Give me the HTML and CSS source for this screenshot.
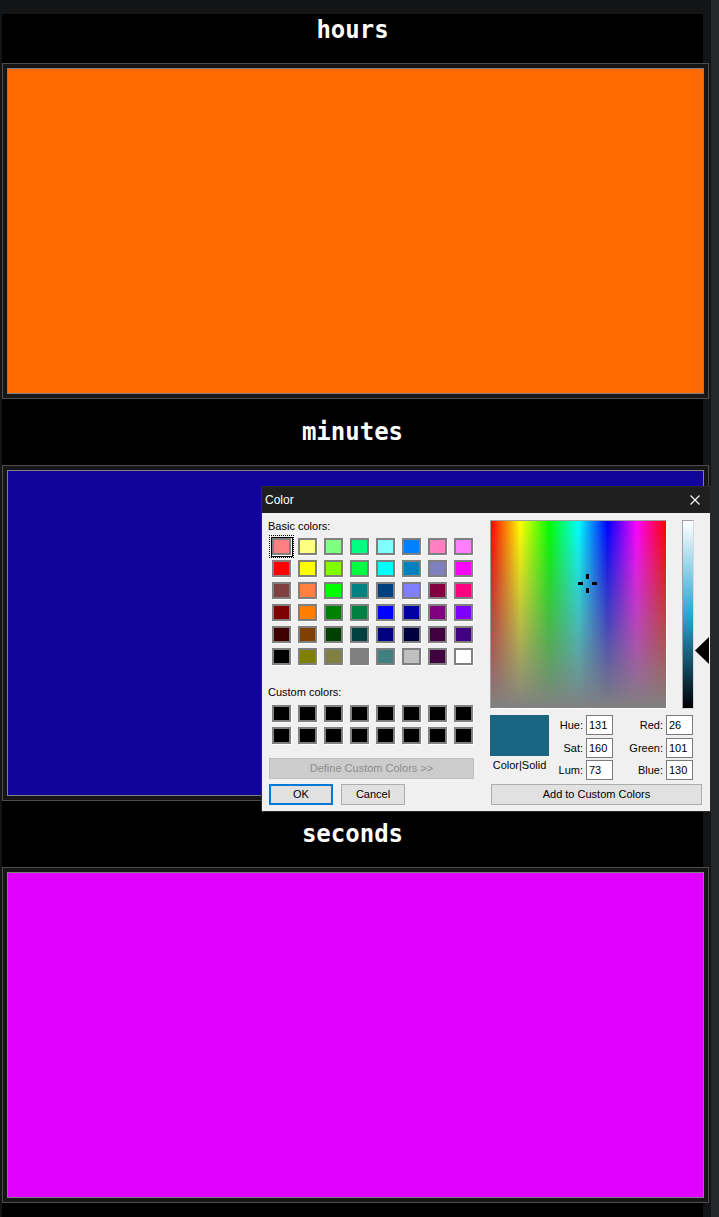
FILE: index.html
```html
<!DOCTYPE html>
<html>
<head>
<meta charset="utf-8">
<title>Clock colors</title>
<link rel="stylesheet" href="styles.css">
</head>
<body>
<div class="app">
  <main class="main">
    <section class="block">
      <h2 class="heading heading--cut">hours</h2>
      <div class="panel"><div class="fill fill--orange"></div></div>
    </section>
    <section class="block">
      <h2 class="heading">minutes</h2>
      <div class="panel"><div class="fill fill--blue"></div></div>
    </section>
    <section class="block">
      <h2 class="heading">seconds</h2>
      <div class="panel"><div class="fill fill--magenta"></div></div>
    </section>
  </main>
  <div class="gutter"></div>
  <div class="scrollbar"></div>
</div>

<div class="dialog">
  <div class="titlebar">
    <span class="title">Color</span>
    <span class="close"><svg width="10" height="10" viewBox="0 0 10 10"><path d="M0.5 0.5 L9.5 9.5 M9.5 0.5 L0.5 9.5" stroke="#ffffff" stroke-width="1.1" fill="none"/></svg></span>
  </div>
  <div class="dlg-body">
    <div class="left">
      <div class="lbl">Basic colors:</div>
      <div class="grid basic">
        <span class="sw sw--sel" style="background:#FF8080"></span>
        <span class="sw" style="background:#FFFF80"></span>
        <span class="sw" style="background:#80FF80"></span>
        <span class="sw" style="background:#00FF80"></span>
        <span class="sw" style="background:#80FFFF"></span>
        <span class="sw" style="background:#0080FF"></span>
        <span class="sw" style="background:#FF80C0"></span>
        <span class="sw" style="background:#FF80FF"></span>
        <span class="sw" style="background:#FF0000"></span>
        <span class="sw" style="background:#FFFF00"></span>
        <span class="sw" style="background:#80FF00"></span>
        <span class="sw" style="background:#00FF40"></span>
        <span class="sw" style="background:#00FFFF"></span>
        <span class="sw" style="background:#0080C0"></span>
        <span class="sw" style="background:#8080C0"></span>
        <span class="sw" style="background:#FF00FF"></span>
        <span class="sw" style="background:#804040"></span>
        <span class="sw" style="background:#FF8040"></span>
        <span class="sw" style="background:#00FF00"></span>
        <span class="sw" style="background:#008080"></span>
        <span class="sw" style="background:#004080"></span>
        <span class="sw" style="background:#8080FF"></span>
        <span class="sw" style="background:#800040"></span>
        <span class="sw" style="background:#FF0080"></span>
        <span class="sw" style="background:#800000"></span>
        <span class="sw" style="background:#FF8000"></span>
        <span class="sw" style="background:#008000"></span>
        <span class="sw" style="background:#008040"></span>
        <span class="sw" style="background:#0000FF"></span>
        <span class="sw" style="background:#0000A0"></span>
        <span class="sw" style="background:#800080"></span>
        <span class="sw" style="background:#8000FF"></span>
        <span class="sw" style="background:#400000"></span>
        <span class="sw" style="background:#804000"></span>
        <span class="sw" style="background:#004000"></span>
        <span class="sw" style="background:#004040"></span>
        <span class="sw" style="background:#000080"></span>
        <span class="sw" style="background:#000040"></span>
        <span class="sw" style="background:#400040"></span>
        <span class="sw" style="background:#400080"></span>
        <span class="sw" style="background:#000000"></span>
        <span class="sw" style="background:#808000"></span>
        <span class="sw" style="background:#808040"></span>
        <span class="sw" style="background:#808080"></span>
        <span class="sw" style="background:#408080"></span>
        <span class="sw" style="background:#C0C0C0"></span>
        <span class="sw" style="background:#400040"></span>
        <span class="sw" style="background:#FFFFFF"></span>
      </div>
      <div class="lbl lbl--custom">Custom colors:</div>
      <div class="grid custom">
        <span class="sw sw--empty"></span><span class="sw sw--empty"></span><span class="sw sw--empty"></span><span class="sw sw--empty"></span>
        <span class="sw sw--empty"></span><span class="sw sw--empty"></span><span class="sw sw--empty"></span><span class="sw sw--empty"></span>
        <span class="sw sw--empty"></span><span class="sw sw--empty"></span><span class="sw sw--empty"></span><span class="sw sw--empty"></span>
        <span class="sw sw--empty"></span><span class="sw sw--empty"></span><span class="sw sw--empty"></span><span class="sw sw--empty"></span>
      </div>
      <div class="btn btn--disabled define">Define Custom Colors &gt;&gt;</div>
      <div class="btn-row">
        <div class="btn btn--default">OK</div>
        <div class="btn">Cancel</div>
      </div>
    </div>
    <div class="right">
      <div class="spec-row">
        <div class="spectrum">
          <svg class="cross" width="20" height="20" viewBox="0 0 20 20">
            <rect x="9" y="1" width="3" height="5" fill="#000"/>
            <rect x="9" y="15" width="3" height="5" fill="#000"/>
            <rect x="1" y="9" width="5" height="3" fill="#000"/>
            <rect x="15" y="9" width="5" height="3" fill="#000"/>
          </svg>
        </div>
        <div class="lum"></div>
        <svg class="pointer" width="14" height="27" viewBox="0 0 14 27"><polygon points="0,13.5 14,0 14,27" fill="#000"/></svg>
      </div>
      <div class="info-row">
        <div class="preview-col">
          <div class="preview"></div>
          <div class="preview-lbl">Color|Solid</div>
        </div>
        <div class="fields">
          <span class="flbl">Hue:</span><span class="fbox">131</span><span class="flbl">Red:</span><span class="fbox">26</span>
          <span class="flbl">Sat:</span><span class="fbox">160</span><span class="flbl">Green:</span><span class="fbox">101</span>
          <span class="flbl">Lum:</span><span class="fbox">73</span><span class="flbl">Blue:</span><span class="fbox">130</span>
        </div>
      </div>
      <div class="btn add">Add to Custom Colors</div>
    </div>
  </div>
</div>
</body>
</html>
```

FILE: styles.css
```css
html, body {
  margin: 0;
  padding: 0;
}

body {
  background: #131416;
  width: 719px;
  height: 1217px;
  overflow: hidden;
  position: relative;
}

.app {
  display: flex;
  height: 1217px;
}

.main {
  flex: none;
  width: 701px;
  margin: 14px 0 0 2px;
  background: #000;
}

.gutter {
  flex: 1;
}

.scrollbar {
  flex: none;
  width: 8px;
  background: #26272a;
}

.heading {
  margin: 0;
  height: 66px;
  text-align: center;
  font-family: "DejaVu Sans Mono", monospace;
  font-weight: bold;
  font-size: 24px;
  line-height: 66px;
  color: #fff;
}

.heading--cut {
  height: 49px;
  line-height: 32px;
}

.panel {
  width: 707px;
  height: 336px;
  box-sizing: border-box;
  border: 1px solid #4d4d4d;
  background: #161616;
  padding: 4px;
}

.fill {
  height: 100%;
  box-sizing: border-box;
  border: 1px solid #7f7f7f;
}

.fill--orange { background: #ff6a00; }
.fill--blue { background: #10049b; }
.fill--magenta { background: #df00ff; }

/* Color dialog */
.dialog {
  position: absolute;
  left: 261px;
  top: 486px;
  width: 450px;
  height: 326px;
  box-sizing: border-box;
  border: 1px solid #2b2b2b;
  background: #f0f0f0;
  font-family: "Liberation Sans", Arial, sans-serif;
  font-size: 11px;
  color: #000;
  display: flex;
  flex-direction: column;
}

.titlebar {
  flex: none;
  height: 26px;
  background: #1f1f1f;
  display: flex;
  align-items: center;
  justify-content: space-between;
}

.title {
  color: #fff;
  font-size: 12px;
  padding-left: 3px;
}

.close {
  width: 30px;
  height: 26px;
  display: flex;
  align-items: center;
  justify-content: center;
}

.dlg-body {
  display: flex;
  padding: 7px 0 0 6px;
}

.left {
  flex: none;
  width: 216px;
  display: flex;
  flex-direction: column;
  align-items: flex-start;
}

.lbl {
  height: 13px;
  line-height: 13px;
}

.lbl--custom {
  margin-top: 21px;
}

.grid {
  display: grid;
  grid-template-columns: repeat(8, 19px);
  grid-auto-rows: 17px;
  column-gap: 7px;
  row-gap: 5px;
  margin-left: 4px;
}

.basic { margin-top: 5px; }
.custom { margin-top: 6px; }

.sw {
  display: block;
  box-sizing: border-box;
  border: 2px solid #808080;
  box-shadow: 1px 1px 0 #fff;
  position: relative;
}

.sw--empty { background: #000; }

.sw--sel::before {
  content: "";
  position: absolute;
  left: -3px;
  top: -3px;
  right: -4px;
  bottom: -4px;
  border: 1px solid #000;
}

.sw--sel::after {
  content: "";
  position: absolute;
  left: -5px;
  top: -5px;
  right: -5px;
  bottom: -5px;
  border: 1px dotted #000;
}

.btn {
  box-sizing: border-box;
  height: 21px;
  width: 64px;
  border: 1px solid #adadad;
  background: #e1e1e1;
  display: flex;
  align-items: center;
  justify-content: center;
  line-height: 13px;
}

.btn--default {
  border: 2px solid #0078d7;
}

.btn--disabled {
  background: #cccccc;
  border-color: #bfbfbf;
  color: #8d8d8d;
}

.define {
  margin: 14px 0 0 1px;
  width: 205px;
}

.btn-row {
  display: flex;
  gap: 8px;
  margin: 5px 0 0 1px;
}

.right {
  flex: none;
  width: 219px;
  margin-left: 6px;
  display: flex;
  flex-direction: column;
  align-items: flex-start;
}

.spec-row {
  display: flex;
  align-items: flex-start;
}

.spectrum {
  position: relative;
  width: 177px;
  height: 189px;
  box-sizing: border-box;
  border: 1px solid;
  border-color: #a0a0a0 #fff #fff #a0a0a0;
  background:
    linear-gradient(to bottom, rgba(128, 128, 128, 0), #808080),
    linear-gradient(to right, #ff0000, #ffff00, #00ff00, #00ffff, #0000ff, #ff00ff, #ff0000);
}

.cross {
  position: absolute;
  left: 86px;
  top: 52px;
}

.lum {
  margin-left: 15px;
  width: 12px;
  height: 189px;
  box-sizing: border-box;
  border: 1px solid;
  border-color: #a0a0a0 #d8d8d8 #d8d8d8 #a0a0a0;
  background: linear-gradient(to bottom, #ffffff, #2aa6d5 50%, #000000);
}

.pointer {
  display: block;
  margin: 117px 0 0 1px;
}

.info-row {
  display: flex;
  margin-top: 6px;
}

.preview-col {
  width: 60px;
  display: flex;
  flex-direction: column;
  align-items: flex-start;
}

.preview {
  width: 59px;
  height: 41px;
  background: #1a6582;
}

.preview-lbl {
  width: 59px;
  margin-top: 3px;
  line-height: 13px;
  text-align: center;
}

.fields {
  display: grid;
  grid-template-columns: 36px 27px 53px 27px;
  grid-auto-rows: 20px;
  row-gap: 2.5px;
}

.flbl {
  text-align: right;
  padding-right: 3px;
  line-height: 20px;
}

.fbox {
  box-sizing: border-box;
  border: 1px solid #7a7a7a;
  background: #fff;
  padding-left: 2px;
  line-height: 18px;
}

.add {
  margin: 4px 0 0 1px;
  width: 211px;
}
```
